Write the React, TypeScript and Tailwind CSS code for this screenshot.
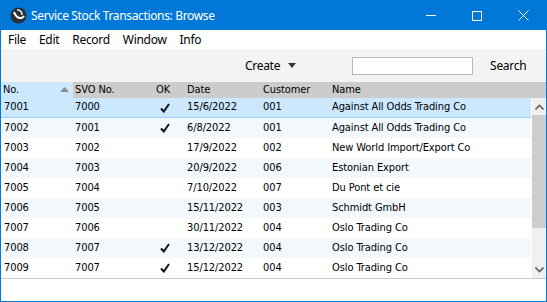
import React from 'react';

type Row = {
    no: string;
    svo: string;
    ok: boolean;
    date: string;
    customer: string;
    name: string;
};

const rows: Row[] = [
    { no: '7001', svo: '7000', ok: true, date: '15/6/2022', customer: '001', name: 'Against All Odds Trading Co' },
    { no: '7002', svo: '7001', ok: true, date: '6/8/2022', customer: '001', name: 'Against All Odds Trading Co' },
    { no: '7003', svo: '7002', ok: false, date: '17/9/2022', customer: '002', name: 'New World Import/Export Co' },
    { no: '7004', svo: '7003', ok: false, date: '20/9/2022', customer: '006', name: 'Estonian Export' },
    { no: '7005', svo: '7004', ok: false, date: '7/10/2022', customer: '007', name: 'Du Pont et cie' },
    { no: '7006', svo: '7005', ok: false, date: '15/11/2022', customer: '003', name: 'Schmidt GmbH' },
    { no: '7007', svo: '7006', ok: false, date: '30/11/2022', customer: '004', name: 'Oslo Trading Co' },
    { no: '7008', svo: '7007', ok: true, date: '13/12/2022', customer: '004', name: 'Oslo Trading Co' },
    { no: '7009', svo: '7007', ok: true, date: '15/12/2022', customer: '004', name: 'Oslo Trading Co' },
];

const Check: React.FC = () => (
    <svg width="10" height="10" viewBox="0 0 10 10">
        <path d="M1 5.5 L3.8 8.5 L9 1" fill="none" stroke="#111" strokeWidth="2" />
    </svg>
);

const Logo: React.FC = () => (
    <svg width="17" height="17" viewBox="0 0 17 17">
        <circle cx="8.5" cy="8.5" r="8" fill="#2b2f36" />
        <path d="M4 5 C6 11, 11 13, 14 9" fill="none" stroke="#fff" strokeWidth="2" />
        <path d="M7 3 C10 3, 12 5, 12 8" fill="none" stroke="#e6e6e6" strokeWidth="1.6" />
    </svg>
);

const App: React.FC = () => {
    return (
        <div className="w-[547px] h-[302px] bg-white border border-[#0078d7] flex flex-col overflow-hidden" style={{ fontFamily: '"Noto Sans", "Open Sans", sans-serif' }}>
            {/* title bar */}
            <div className="h-[29px] bg-[#0078d7] flex items-center text-white shrink-0">
                <div className="pl-[9px] pr-[4px] flex items-center"><Logo /></div>
                <span className="text-[12px] leading-none tracking-[-0.35px]">Service Stock Transactions: Browse</span>
                <div className="ml-auto flex items-center h-full">
                    <div className="w-[46px] h-full flex items-center justify-center">
                        <div className="w-[10px] h-px bg-white" />
                    </div>
                    <div className="w-[46px] h-full flex items-center justify-center">
                        <div className="w-[10px] h-[10px] border border-white" />
                    </div>
                    <div className="w-[46px] h-full flex items-center justify-center">
                        <svg width="11" height="11" viewBox="0 0 11 11">
                            <path d="M0.5 0.5 L10.5 10.5 M10.5 0.5 L0.5 10.5" stroke="#fff" strokeWidth="1" />
                        </svg>
                    </div>
                </div>
            </div>

            {/* menu */}
            <div className="h-[19px] flex items-center text-[12px] text-black shrink-0 pl-[7px] gap-[13px] tracking-[-0.3px]">
                <span>File</span>
                <span>Edit</span>
                <span>Record</span>
                <span>Window</span>
                <span>Info</span>
            </div>

            {/* toolbar */}
            <div className="h-[33px] bg-[#f3f3f3] flex items-center text-[12px] shrink-0 tracking-[-0.3px]">
                <div className="ml-[244px] flex items-center gap-[8px]">
                    <span>Create</span>
                    <svg width="8" height="5" viewBox="0 0 8 5"><path d="M0 0 H8 L4 5 Z" fill="#333" /></svg>
                </div>
                <div className="ml-[56px] w-[121px] h-[18px] bg-white border border-[#b9b9b9]" />
                <span className="ml-[17px]">Search</span>
            </div>

            {/* table */}
            <div className="flex-1 flex flex-col" style={{ fontFamily: '"DejaVu Sans Condensed", "DejaVu Sans", sans-serif' }}>
                <div className="h-[16px] flex text-[11px] bg-[#cccccc] shrink-0 tracking-[-0.1px]">
                    <div className="w-[72px] bg-[#cce8ff] flex items-center pl-[2px] relative">
                        No.
                        <svg className="absolute left-[59px] top-[5px]" width="9" height="5" viewBox="0 0 9 5"><path d="M0 5 L4.5 0 L9 5 Z" fill="#8c8c8c" /></svg>
                    </div>
                    <div className="w-[81px] flex items-center pl-[2px]">SVO No.</div>
                    <div className="w-[31px] flex items-center pl-[2px]">OK</div>
                    <div className="w-[76px] flex items-center pl-[2px]">Date</div>
                    <div className="w-[69px] flex items-center pl-[2px]">Customer</div>
                    <div className="flex-1 flex items-center pl-[2px]">Name</div>
                </div>
                <div className="flex">
                    <div className="w-[530px] flex flex-col text-[11px] tracking-[-0.1px]">
                        {rows.map((r, i) => (
                            <div
                                key={r.no}
                                className={
                                    'h-[20px] flex items-center ' +
                                    (i === 0 ? 'bg-[#cce8ff] border-b border-[#99d1ff]' : i % 2 === 1 ? 'bg-[#f3f8fd]' : 'bg-white')
                                }
                            >
                                <div className="w-[72px] pl-[3px]">{r.no}</div>
                                <div className="w-[81px] pl-[2px]">{r.svo}</div>
                                <div className="w-[31px] pl-[6px] flex items-center">{r.ok ? <Check /> : null}</div>
                                <div className="w-[76px] pl-[2px]">{r.date}</div>
                                <div className="w-[69px] pl-[2px]">{r.customer}</div>
                                <div className="flex-1 pl-[2px]">{r.name}</div>
                            </div>
                        ))}
                    </div>
                    <div className="ml-px flex-1 bg-[#f0f0f0] flex flex-col items-center">
                        <div className="h-[17px] w-full flex items-center justify-center">
                            <svg width="9" height="6" viewBox="0 0 9 6"><path d="M0.5 5.5 L4.5 1.5 L8.5 5.5" fill="none" stroke="#606060" strokeWidth="1.6" /></svg>
                        </div>
                        <div className="w-full h-[113px] bg-[#cdcdcd]" />
                        <div className="flex-1" />
                        <div className="h-[17px] w-full flex items-center justify-center">
                            <svg width="9" height="6" viewBox="0 0 9 6"><path d="M0.5 0.5 L4.5 4.5 L8.5 0.5" fill="none" stroke="#606060" strokeWidth="1.6" /></svg>
                        </div>
                    </div>
                </div>
                <div className="h-px bg-[#c8c8c8]" />
            </div>
        </div>
    );
};

export default App;
